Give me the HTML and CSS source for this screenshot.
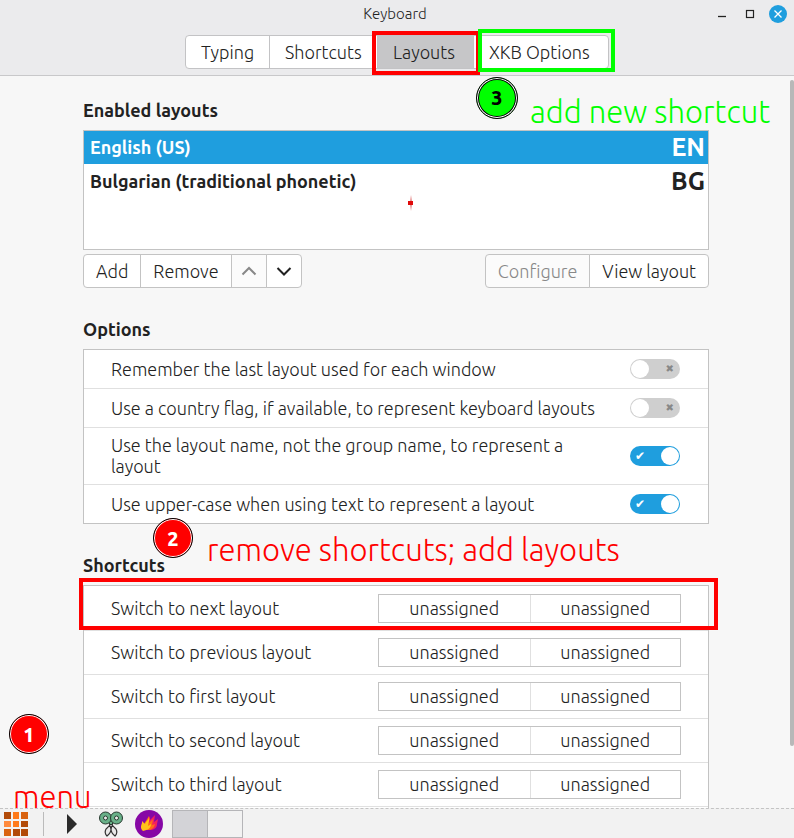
FILE: index.html
```html
<!DOCTYPE html>
<html lang="en">
<head>
  <meta charset="UTF-8">
  <meta name="viewport" content="width=device-width, initial-scale=1">
  <title>Keyboard</title>
  <link rel="stylesheet" href="styles.css">
</head>

<body>
  <header class="header">
    <div class="titlebar">
      <h1>Keyboard</h1>
      <div class="window-buttons">
        <button aria-label="Minimize"><svg width="18" height="18"><path d="M5 11.5h8" stroke="#222" stroke-width="1.3"/></svg></button>
        <button aria-label="Maximize"><svg width="18" height="18"><rect x="5.5" y="5.5" width="7" height="7" fill="none" stroke="#222" stroke-width="1.2"/></svg></button>
        <button class="close-btn" aria-label="Close"><svg width="18" height="18"><path d="M5.5 5.5l7 7M12.5 5.5l-7 7" stroke="#fff" stroke-width="1.3"/></svg></button>
      </div>
    </div>

    <nav class="tabs">
      <button>Typing</button>
      <button>Shortcuts</button>
      <button class="active">Layouts</button>
      <button>XKB Options</button>
      <div class="mark mark-layouts"></div>
      <div class="mark mark-xkb"></div>
      <div class="step step-3">3</div>
      <div class="note note-3">add new shortcut</div>
    </nav>
  </header>

  <main class="content">
    <section>
      <h2>Enabled layouts</h2>
      <div class="layout-box">
        <ul class="layout-list">
          <li class="selected"><span>English (US)</span><span class="code">EN</span></li>
          <li><span>Bulgarian (traditional phonetic)</span><span class="code">BG</span></li>
        </ul>
        <svg class="dot" width="6" height="16"><path d="M3 0l1 8-1 8-1-8z" fill="#e07070"/><rect x="0" y="6" width="5" height="4" fill="#e00b0b"/></svg>
      </div>
      <div class="toolbar">
        <div class="btn-group">
          <button>Add</button>
          <button>Remove</button>
          <button class="arrow" aria-label="Move up" disabled><svg width="16" height="16"><path d="M1.5 11.5L8 5l6.5 6.5" fill="none" stroke="currentColor" stroke-width="2"/></svg></button>
          <button class="arrow" aria-label="Move down"><svg width="16" height="16"><path d="M1.5 5L8 11.5 14.5 5" fill="none" stroke="currentColor" stroke-width="2"/></svg></button>
        </div>
        <div class="btn-group">
          <button disabled>Configure</button>
          <button>View layout</button>
        </div>
      </div>
    </section>

    <section>
      <h2>Options</h2>
      <div class="panel">
        <div class="option">
          <label for="opt1">Remember the last layout used for each window</label>
          <input type="checkbox" class="switch" id="opt1">
        </div>
        <div class="option">
          <label for="opt2">Use a country flag, if available, to represent keyboard layouts</label>
          <input type="checkbox" class="switch" id="opt2">
        </div>
        <div class="option">
          <label for="opt3">Use the layout name, not the group name, to represent a layout</label>
          <input type="checkbox" class="switch" id="opt3" checked>
        </div>
        <div class="option">
          <label for="opt4">Use upper-case when using text to represent a layout</label>
          <input type="checkbox" class="switch" id="opt4" checked>
        </div>
      </div>
    </section>

    <section class="shortcuts">
      <h2>Shortcuts</h2>
      <div class="panel">
        <div class="shortcut"><span>Switch to next layout</span><div class="keys"><button>unassigned</button><button>unassigned</button></div></div>
        <div class="shortcut"><span>Switch to previous layout</span><div class="keys"><button>unassigned</button><button>unassigned</button></div></div>
        <div class="shortcut"><span>Switch to first layout</span><div class="keys"><button>unassigned</button><button>unassigned</button></div></div>
        <div class="shortcut"><span>Switch to second layout</span><div class="keys"><button>unassigned</button><button>unassigned</button></div></div>
        <div class="shortcut"><span>Switch to third layout</span><div class="keys"><button>unassigned</button><button>unassigned</button></div></div>
        <div class="shortcut"></div>
      </div>
      <div class="mark mark-next"></div>
      <div class="step step-2">2</div>
      <div class="note note-2">remove shortcuts; add layouts</div>
    </section>

    <div class="scrollbar"></div>
  </main>

  <footer class="taskbar">
    <div class="step step-1">1</div>
    <div class="note note-1">menu</div>
    <button class="menu-btn" aria-label="Menu">
      <svg width="24" height="24">
        <path fill="#b24a08" d="M0 0h7v7H0zM17 9h7v6h-7zM9 17h7v7H9zM17 17h7v7h-7z"/>
        <path fill="#ff7a1a" d="M9 0h6v7H9zM9 9h6v6H9z"/>
        <path fill="#d9620f" d="M17 0h7v7h-7zM0 17h7v7H0z"/>
        <path fill="#ff8a3c" d="M0 9h7v6H0z"/>
      </svg>
    </button>
    <button class="expand-btn" aria-label="Expand"><svg width="10" height="20"><path d="M0 0l10 10L0 20z" fill="#2b2b2b"/></svg></button>
    <button class="app-btn" aria-label="Screenshot scissors">
      <svg width="24" height="28">
        <path d="M10 12l7 7q2 4-1 7-4-3-4-7zM14 12l-7 7q-2 4 1 7 4-3 4-7z" fill="#e9e9e9" stroke="#333" stroke-width="1.2"/>
        <path d="M6 9h12l-6 6z" fill="#68b088" stroke="#26382e"/>
        <circle cx="6.500" cy="8" r="6" fill="#68b088" stroke="#26382e"/>
        <circle cx="17.500" cy="8" r="6" fill="#68b088" stroke="#26382e"/>
        <circle cx="6.500" cy="8" r="2" fill="#eee" stroke="#26382e"/>
        <circle cx="17.500" cy="8" r="2" fill="#eee" stroke="#26382e"/>
      </svg>
    </button>
    <button class="app-btn" aria-label="Flameshot">
      <svg width="28" height="28">
        <circle cx="14" cy="14" r="14" fill="#8607a5"/>
        <path d="M14 20c5 0 8-2 8-6l1-5-4 3 1-7-5 5v-4l-5 9z" fill="#f3205f"/>
        <path d="M12 20c5 0 7-2 8-6l-3 1 1-6-4 4V6l-5 8z" fill="#ff6a1a"/>
        <path d="M8 21c-3-3-2-5-1-8v-2l3 3c1-3 4-4 4-7 1 3-1 6-1 9l3-2c0 4-3 6-8 7z" fill="#ffc21a"/>
      </svg>
    </button>
    <div class="workspaces">
      <button class="current" aria-label="Workspace 1"></button>
      <button aria-label="Workspace 2"></button>
    </div>
  </footer>
</body>
</html>
```
FILE: styles.css
```css
* {
  box-sizing: border-box;
}

body {
  margin: 0;
  height: 100vh;
  display: flex;
  flex-direction: column;
  background: #f7f7f7;
  color: #222;
  font-family: Ubuntu, "Noto Sans", sans-serif;
  font-size: 18px;
  font-weight: 300;
  line-height: 21px;
}

button {
  margin: 0;
  padding: 0;
  border: none;
  background: none;
  color: inherit;
  font: inherit;
  white-space: nowrap;
}

svg {
  display: block;
}

/* header */
.header {
  position: relative;
  z-index: 1;
  padding-bottom: 6px;
  background: #ebebed;
  border-bottom: 1px solid #c8c8ca;
}

.titlebar {
  position: relative;
  height: 28px;
  margin-bottom: 7px;
}

.titlebar h1 {
  margin: 0;
  padding-right: 4px;
  font-size: 15px;
  font-weight: 300;
  line-height: 28px;
  text-align: center;
}

.window-buttons {
  position: absolute;
  top: 5px;
  right: 7px;
  display: flex;
  gap: 10px;
}

.close-btn {
  border-radius: 50%;
  background: #1f9ede;
}

.tabs {
  position: relative;
  display: grid;
  grid-template-columns: 83px 108px 96px 133px;
  width: 424px;
  height: 34px;
  margin: 0 auto;
  padding-right: 2px;
  border: 1px solid #c3c3c5;
  border-radius: 4px;
  background: #fff;
}

.tabs button {
  padding: 0 15px;
  text-align: left;
}

.tabs button + button {
  border-left: 1px solid #c3c3c5;
}

.tabs .active {
  background: #c6c6c8;
}

/* content */
.content {
  position: relative;
  flex: 1;
  min-height: 0;
  overflow: hidden;
  padding: 22px 85px 0 83px;
}

section {
  position: relative;
  margin-bottom: 29px;
}

h2 {
  margin: 0 0 8px;
  font-size: 18px;
  font-weight: 600;
  line-height: 24px;
}

.layout-box {
  position: relative;
  height: 120px;
  margin-bottom: 4px;
  background: #fff;
  border: 1px solid #c3c3c3;
}

.layout-list {
  margin: 0;
  padding: 0;
  list-style: none;
}

.layout-list li {
  display: flex;
  justify-content: space-between;
  align-items: center;
  height: 34px;
  padding: 0 3px 0 6px;
  font-weight: 600;
}

.layout-list .selected {
  height: 33px;
  background: #1f9ede;
  color: #fff;
}

.layout-list .code {
  font-size: 25px;
}

.dot {
  position: absolute;
  left: 52%;
  top: 64px;
}

.toolbar {
  display: flex;
  justify-content: space-between;
}

.btn-group {
  display: flex;
  height: 34px;
}

.btn-group button {
  padding: 0 12px;
  background: #fff;
  border: 1px solid #c3c3c3;
}

.btn-group button + button {
  margin-left: -1px;
}

.btn-group button:first-child {
  border-radius: 4px 0 0 4px;
}

.btn-group button:last-child {
  border-radius: 0 4px 4px 0;
}

.btn-group .arrow {
  width: 36px;
  padding: 0 9px;
}

.btn-group button:disabled {
  background: #fbfbfb;
  color: #888;
}

.panel {
  background: #fff;
  border: 1px solid #c3c3c3;
}

.option {
  display: flex;
  justify-content: space-between;
  align-items: center;
  min-height: 39px;
  padding: 7px 28px 7px 27px;
  border-bottom: 1px solid #e0e0e0;
}

.option:last-child {
  min-height: 38px;
  border-bottom: none;
}

.option label {
  max-width: 488px;
}

.shortcut + .shortcut {
  border-top: 1px solid #e0e0e0;
}

.switch {
  appearance: none;
  position: relative;
  flex: none;
  width: 50px;
  height: 20px;
  margin: 0;
  border-radius: 10px;
  background: #cfcfcf;
}

.switch::before {
  content: "";
  position: absolute;
  top: 1px;
  left: 1px;
  width: 18px;
  height: 18px;
  border-radius: 50%;
  background: #fff;
}

.switch::after {
  content: "✖";
  position: absolute;
  right: 6px;
  font: 10px/20px "DejaVu Sans", sans-serif;
  color: #888;
}

.switch:checked {
  background: #1f9ede;
}

.switch:checked::before {
  left: 31px;
}

.switch:checked::after {
  content: "✔";
  left: 5px;
  right: auto;
  font-size: 12px;
  color: #fff;
}

.shortcut {
  display: flex;
  justify-content: space-between;
  align-items: center;
  height: 44px;
  padding: 0 27px;
}

.keys {
  display: grid;
  grid-template-columns: 1fr 1fr;
  width: 303px;
  height: 29px;
  border: 1px solid #c3c3c3;
}

.keys button + button {
  border-left: 1px solid #e0e0e0;
}

.scrollbar {
  position: absolute;
  top: 4px;
  right: 0;
  width: 4px;
  height: 91%;
  border-radius: 2px;
  background: #b8b8b8;
}

/* taskbar */
.taskbar {
  position: relative;
  display: flex;
  align-items: center;
  height: 30px;
  padding-left: 4px;
  background: #f2f2f2;
  border-top: 1px dashed #c4c4c4;
}

.menu-btn {
  width: 40px;
  border-right: 1px solid #bbb;
}

.expand-btn {
  margin: 0 22px 0 23px;
}

.app-btn {
  margin-right: 12px;
}

.app-btn + .app-btn {
  margin-right: 9px;
}

.workspaces {
  display: flex;
  border: 1px solid #b5b5b8;
}

.workspaces button {
  width: 34px;
  height: 26px;
}

.workspaces .current {
  width: 35px;
  background: #d3d3d7;
  border-right: 1px solid #b5b5b8;
}

/* tutorial marks */
.mark {
  position: absolute;
  border: 4px solid #ff0000;
  pointer-events: none;
}

.mark-layouts {
  top: -5px;
  left: 186px;
  width: 108px;
  height: 44px;
}

.mark-xkb {
  top: -7px;
  left: 292px;
  width: 137px;
  height: 43px;
  border-color: #00ff00;
}

.mark-next {
  top: 25px;
  left: -4px;
  right: -9px;
  height: 52px;
}

.step {
  position: absolute;
  width: 40px;
  height: 40px;
  border: 1px solid #000;
  border-radius: 50%;
  box-shadow: inset 0 0 0 1px #fff;
  background: #ff0000;
  color: #fff;
  font-size: 20px;
  font-weight: 800;
  line-height: 40px;
  text-align: center;
}

.note {
  position: absolute;
  font-size: 31px;
  line-height: 40px;
  white-space: nowrap;
  color: #ff0000;
}

.step-3 {
  top: 41px;
  left: 290px;
  width: 42px;
  height: 42px;
  background: #00ff00;
  color: #000;
  box-shadow: inset 0 0 0 1px #fff, inset 0 0 0 2px #000;
}

.note-3 {
  top: 56px;
  left: 344px;
  color: #00ff00;
}

.step-2 {
  top: -35px;
  left: 70px;
}

.note-2 {
  top: -23px;
  left: 124px;
}

.step-1 {
  bottom: 84px;
  left: 9px;
}

.note-1 {
  bottom: 21px;
  left: 13px;
}
```
